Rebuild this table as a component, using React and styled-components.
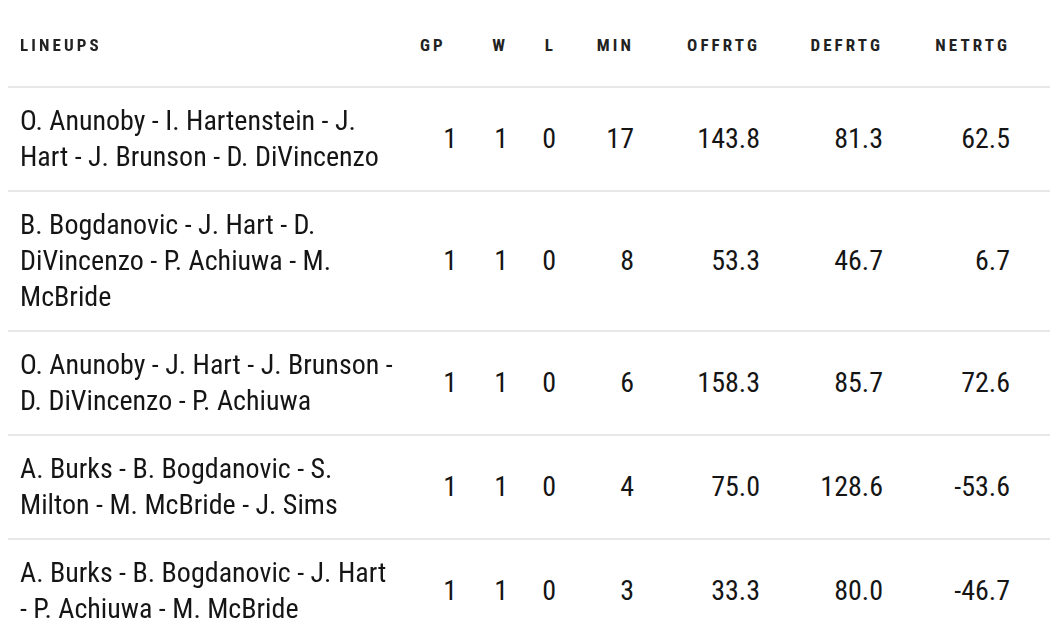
import React from "react";
import styled, { createGlobalStyle } from "styled-components";

const GlobalStyle = createGlobalStyle`
  html, body {
    margin: 0;
    padding: 0;
    background: #fff;
  }
  body {
    font-family: "Roboto Condensed", Roboto, "Liberation Sans", sans-serif;
    font-stretch: condensed;
    color: #151515;
    overflow: hidden;
  }
`;

const Wrap = styled.div`
  padding-left: 8px;
  width: 1200px;
`;

const Table = styled.table`
  border-collapse: collapse;
  table-layout: fixed;
  width: 1100px;
`;

const Col = styled.col`
  width: ${(p) => p.w}px;
`;

// sticky first column with a faint shadow on its right edge
const stickyCss = `
  position: sticky;
  left: 0;
  z-index: 1;
  box-shadow: 5px 0 6px -2px rgba(0, 0, 0, 0.06);
`;

const HeadCell = styled.th`
  height: 82px;
  padding: 4px 12px 0;
  font-size: 17px;
  font-weight: 700;
  letter-spacing: 3.1px;
  color: #222;
  text-align: ${(p) => p.align || "right"};
  vertical-align: middle;
  border-bottom: 2px solid #e8e8e8;
  white-space: nowrap;
  background: #fff;
  ${(p) => p.sticky && stickyCss}
`;

const Cell = styled.td`
  padding: 15px 12px;
  font-size: 28px;
  line-height: 36px;
  text-align: ${(p) => p.align || "right"};
  vertical-align: middle;
  border-bottom: 2px solid #e8e8e8;
  background: #fff;
  ${(p) => p.sticky && stickyCss}
`;

const cols = [
  { key: "gp", label: "GP", w: 61, align: "left" },
  { key: "w", label: "W", w: 51 },
  { key: "l", label: "L", w: 48 },
  { key: "min", label: "MIN", w: 78 },
  { key: "off", label: "OFFRTG", w: 126 },
  { key: "def", label: "DEFRTG", w: 123 },
  { key: "net", label: "NETRTG", w: 127 },
];

const rows = [
  { name: "O. Anunoby - I. Hartenstein - J. Hart - J. Brunson - D. DiVincenzo", gp: 1, w: 1, l: 0, min: 17, off: "143.8", def: "81.3", net: "62.5" },
  { name: "B. Bogdanovic - J. Hart - D. DiVincenzo - P. Achiuwa - M. McBride", gp: 1, w: 1, l: 0, min: 8, off: "53.3", def: "46.7", net: "6.7" },
  { name: "O. Anunoby - J. Hart - J. Brunson - D. DiVincenzo - P. Achiuwa", gp: 1, w: 1, l: 0, min: 6, off: "158.3", def: "85.7", net: "72.6" },
  { name: "A. Burks - B. Bogdanovic - S. Milton - M. McBride - J. Sims", gp: 1, w: 1, l: 0, min: 4, off: "75.0", def: "128.6", net: "-53.6" },
  { name: "A. Burks - B. Bogdanovic - J. Hart - P. Achiuwa - M. McBride", gp: 1, w: 1, l: 0, min: 3, off: "33.3", def: "80.0", net: "-46.7" },
];

export default function App() {
  return (
    <Wrap>
      <GlobalStyle />
      <Table>
        <colgroup>
          <Col w={400} />
          {cols.map((c) => (
            <Col key={c.key} w={c.w} />
          ))}
          <Col w={86} />
        </colgroup>
        <thead>
          <tr>
            <HeadCell align="left" sticky>
              LINEUPS
            </HeadCell>
            {cols.map((c) => (
              <HeadCell key={c.key} align={c.align}>
                {c.label}
              </HeadCell>
            ))}
            <HeadCell />
          </tr>
        </thead>
        <tbody>
          {rows.map((r, i) => (
            <tr key={i}>
              <Cell align="left" sticky>
                {r.name}
              </Cell>
              {cols.map((c) => (
                <Cell key={c.key}>{r[c.key]}</Cell>
              ))}
              <Cell />
            </tr>
          ))}
        </tbody>
      </Table>
    </Wrap>
  );
}
